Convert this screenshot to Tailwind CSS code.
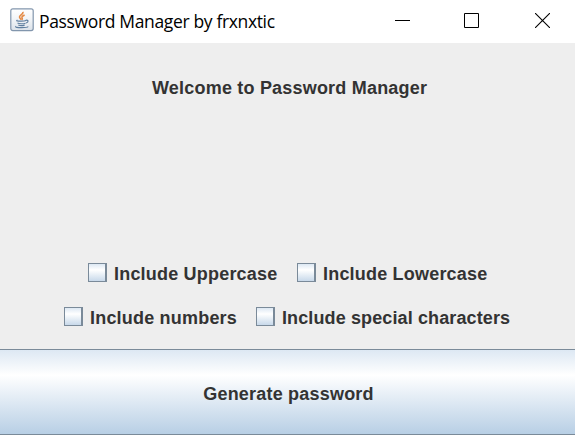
<!DOCTYPE html>
<html lang="en">
<head>
<meta charset="utf-8">
<title>Password Manager by frxnxtic</title>
<script src="https://cdn.jsdelivr.net/npm/@tailwindcss/browser@4"></script>
</head>
<body class="w-[575px] h-[435px] overflow-hidden bg-[#eeeeee] flex flex-col font-['Liberation_Sans',Arial,sans-serif] text-[18px] leading-[22px] font-bold tracking-[0.2px] text-[#333333]">
  <header class="h-[43px] shrink-0 bg-white flex items-start pl-[10px] text-black">
    <svg class="mt-2 shrink-0" width="24" height="24" viewBox="0 0 24 24" fill="none">
      <defs><linearGradient id="tile" x1="0" y1="0" x2="0" y2="1"><stop offset="0" stop-color="#fff"/><stop offset=".5" stop-color="#f1f4f7"/><stop offset="1" stop-color="#dbe2e9"/></linearGradient></defs>
      <rect x=".8" y=".8" width="22.4" height="21.8" rx="2" fill="url(#tile)" stroke="#8296ad" stroke-width="1.2"/>
      <path d="M12.8 3.8c1.2 2.2-3.6 3-3.3 5.2.1 1.2 1.3 1.8 1.7 2.8M14.6 7c-2 .9-3.2 1.7-2.5 3 .4.7.4 1.2-.3 1.800" stroke="#e48a45" stroke-width="1.6"/>
      <path d="M7.500 12.100c-2 .8 0 1.100 3.600 1.100 2.300 0 4-.2 4.900-.7M7.500 14.900c1.200 1.100 6.200 1.100 8 .3M8.300 17c1.700.8 4.500.8 6.300.1M15.800 12.300c2.900-.7 3 2 .2 2.700M6 18.200c-1.300 1.200 1.800 1.500 5.600 1.500 3.400 0 6-.4 6.600-1.200" stroke="#5f7f9f" stroke-width="1.200"/>
    </svg>
    <h1 class="ml-[5px] mt-[10px] w-[340px] whitespace-nowrap font-['Open_Sans','Noto_Sans',sans-serif] font-normal text-[17.500px] tracking-[-0.350px]">Password Manager by frxnxtic</h1>
    <div class="ml-4 mt-[13px] flex gap-[54px]">
      <svg width="15" height="15" viewBox="0 0 15 15"><path d="M0 7.500h15" stroke="#000"/></svg>
      <svg width="15" height="15" viewBox="0 0 15 15"><path d="M.5.5h14v14h-14z" fill="none" stroke="#000"/></svg>
      <svg class="ml-0.5" width="15" height="15" viewBox="0 0 15 15"><path d="M0 0l15 15M15 0L0 15" stroke="#000" stroke-width="1.100"/></svg>
    </div>
  </header>
  <main class="h-[306px] shrink-0 flex flex-col">
    <h2 class="mt-[34px] pl-[152px]"><span class="whitespace-nowrap">Welcome to Password Manager</span></h2>
    <div class="mt-[164px] flex pl-[88px] h-[22px]">
      <label class="w-[209px] flex gap-[7px] whitespace-nowrap"><span class="size-[19px] shrink-0 border border-r-2 border-[#7a8a99] bg-linear-to-b from-[#dde8f3] via-white via-35% to-[#c8d9ea]"></span>Include Uppercase</label>
      <label class="flex gap-[7px] whitespace-nowrap"><span class="size-[19px] shrink-0 border border-r-2 border-[#7a8a99] bg-linear-to-b from-[#dde8f3] via-white via-35% to-[#c8d9ea]"></span>Include Lowercase</label>
    </div>
    <div class="mt-[22px] flex pl-[64px] h-[22px]">
      <label class="w-[192px] flex gap-[7px] whitespace-nowrap"><span class="size-[19px] shrink-0 border border-r-2 border-[#7a8a99] bg-linear-to-b from-[#dde8f3] via-white via-35% to-[#c8d9ea]"></span>Include numbers</label>
      <label class="flex gap-[7px] whitespace-nowrap tracking-[0.120px]"><span class="size-[19px] shrink-0 border border-r-2 border-[#7a8a99] bg-linear-to-b from-[#dde8f3] via-white via-35% to-[#c8d9ea]"></span>Include special characters</label>
    </div>
  </main>
  <button class="h-[86px] w-full shrink-0 border-y border-[#7a8a99] bg-linear-to-b from-[#dde8f3] via-white via-30% to-[#b8cfe5] pt-[3px] pl-[2px] flex items-center justify-center tracking-[0.2px]"><span>Generate password</span></button>
</body>
</html>
